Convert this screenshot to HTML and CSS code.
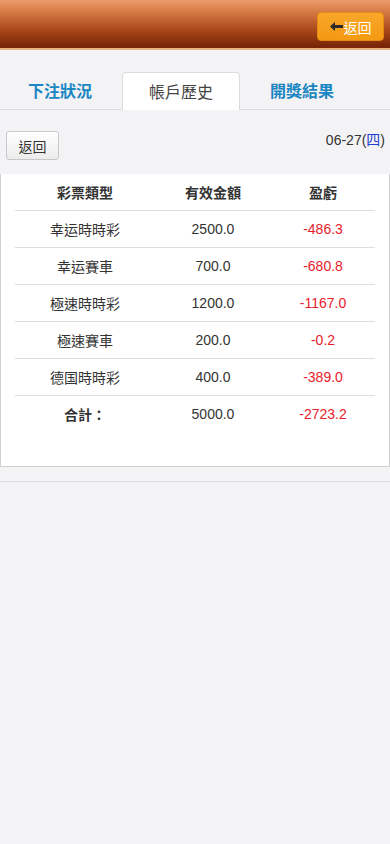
FILE: index.html
```html
<!DOCTYPE html>
<html lang="zh-Hant">
<head>
<meta charset="utf-8">
<meta name="viewport" content="width=device-width, initial-scale=1">
<link rel="stylesheet" href="styles.css">
</head>
<body>
<header class="topbar">
  <button class="back-top"><svg class="arrow" width="13" height="9" viewBox="0 0 13 9"><path d="M0 4.5 L5 0 L5 3 L13 3 L13 6 L5 6 L5 9 Z" fill="#2b2b2b"/></svg>返回</button>
</header>
<nav class="tabs">
  <div class="tab">下注狀況</div>
  <div class="tab active">帳戶歷史</div>
  <div class="tab">開獎結果</div>
</nav>
<div class="toolbar">
  <button class="btn">返回</button>
  <div class="date">06-27(<span class="wd">四</span>)</div>
</div>
<section class="panel">
  <table class="report">
    <thead>
      <tr><th>彩票類型</th><th>有效金額</th><th>盈虧</th></tr>
    </thead>
    <tbody>
      <tr><td>幸运時時彩</td><td>2500.0</td><td class="neg">-486.3</td></tr>
      <tr><td>幸运賽車</td><td>700.0</td><td class="neg">-680.8</td></tr>
      <tr><td>極速時時彩</td><td>1200.0</td><td class="neg">-1167.0</td></tr>
      <tr><td>極速賽車</td><td>200.0</td><td class="neg">-0.2</td></tr>
      <tr><td>德国時時彩</td><td>400.0</td><td class="neg">-389.0</td></tr>
      <tr class="total"><td class="label">合計：</td><td>5000.0</td><td class="neg">-2723.2</td></tr>
    </tbody>
  </table>
</section>
<div class="footer-line"></div>
</body>
</html>
```
FILE: styles.css
```css
* { box-sizing: border-box; }
html, body { margin: 0; padding: 0; }
body {
  background: #f3f2f5;
  font-family: "Liberation Sans", Arial, "Noto Sans CJK TC", sans-serif;
  color: #333;
  min-height: 844px;
}
.topbar {
  height: 50px;
  background: linear-gradient(to bottom, #eb9c6a 0%, #d67a44 25%, #ac4a1c 60%, #7a2608 96%, #7a2608 100%);
  border-bottom: 2px solid #eab485;
  display: flex;
  justify-content: flex-end;
  align-items: flex-start;
  padding: 12px 6px 0 0;
}
.back-top {
  width: 67px;
  height: 29px;
  background: linear-gradient(to bottom, #f8a72a, #f39912);
  border: 1px solid #e48a10;
  border-radius: 4px;
  color: #fff;
  font-family: inherit;
  font-size: 14px;
  padding: 0;
  display: flex;
  align-items: center;
  justify-content: center;
}
.back-top .arrow {
  margin-right: 1px;
}
.tabs {
  display: flex;
  gap: 3px;
  padding: 22px 0 0 1px;
  border-bottom: 1px solid #dcdcdc;
  height: 60px;
}
.tab {
  height: 37px;
  padding: 0 26px 2px;
  display: flex;
  align-items: center;
  font-size: 16px;
  font-weight: bold;
  color: #1a86c2;
  border: 1px solid transparent;
  border-bottom: none;
  border-radius: 4px 4px 0 0;
}
.tab.active {
  background: #fff;
  border-color: #dcdcdc;
  color: #444;
  font-weight: normal;
  height: 38px;
  margin-bottom: -1px;
}
.toolbar {
  height: 64px;
  display: flex;
  align-items: center;
  justify-content: space-between;
  padding: 0 5px 0 6px;
}
.btn {
  width: 53px;
  height: 29px;
  background: linear-gradient(to bottom, #ffffff, #ececec);
  border: 1px solid #c8c8c8;
  border-radius: 3px;
  font-family: inherit;
  font-size: 14px;
  color: #333;
  padding: 0;
  margin-top: 7px;
}
.date {
  font-size: 14px;
  color: #333;
  margin-top: -7px;
}
.date .wd { color: #1f3fd0; }
.panel {
  background: #fff;
  border: 1px solid #cfcfcf;
  border-top: none;
  padding: 0 14px 34px 14px;
}
.report {
  width: 100%;
  border-collapse: collapse;
  font-size: 14px;
}
.report th, .report td {
  text-align: center;
  padding: 0;
}
.report th {
  height: 36px;
  font-weight: bold;
  color: #333;
}
.report th:nth-child(1) { width: 140px; }
.report th:nth-child(2) { width: 116px; }
.report td {
  height: 37px;
  border-top: 1px solid #dedede;
  color: #333;
}
.report td.neg { color: #e8202a; }
.report tr.total td.label {
  font-weight: bold;
  font-size: 14px;
}
.footer-line {
  margin-top: 14px;
  border-top: 1px solid #dcdcdc;
}
```
